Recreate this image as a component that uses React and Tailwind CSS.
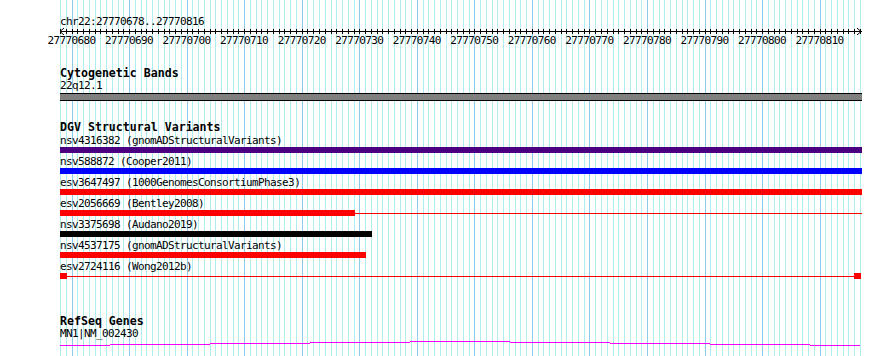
import React from 'react';

// track view constants
const START = 27770678;
const LEFT = 60;
const BASES = 139;
const SCALE = 800 / BASES;

const mono = "font-['DejaVu_Sans_Mono','Liberation_Mono',monospace]";

const variants = [
    { id: 'nsv4316382', source: 'gnomADStructuralVariants', bar: 'w-[802px] bg-[#4b0082]' },
    { id: 'nsv588872', source: 'Cooper2011', bar: 'w-[802px] bg-[#0000ff]' },
    { id: 'esv3647497', source: '1000GenomesConsortiumPhase3', bar: 'w-[802px] bg-[#ff0000]' },
    { id: 'esv2056669', source: 'Bentley2008', bar: 'w-[295px] bg-[#ff0000]', tail: true },
    { id: 'nsv3375698', source: 'Audano2019', bar: 'w-[312px] bg-black' },
    { id: 'nsv4537175', source: 'gnomADStructuralVariants', bar: 'w-[306px] bg-[#ff0000]' },
    { id: 'esv2724116', source: 'Wong2012b', split: true },
];

const geneSteps = [
    [60, 110, 345],
    [110, 210, 344],
    [210, 310, 343],
    [310, 410, 342],
    [410, 510, 341],
    [510, 610, 342],
    [610, 710, 343],
    [710, 810, 344],
    [810, 860, 345],
];

// ========================================
// Background grid (one line per base)
// ========================================
const Grid = () => {
    const lines = [];
    for (let k = 0; k <= BASES; k++) {
        const x = Math.round(LEFT + k * SCALE);
        lines.push(
            <rect key={k} x={x} y={0} width={1} height={356} fill={k % 10 === 2 ? '#8ccbeb' : '#aeeeee'} />
        );
    }
    return (
        <svg className="absolute inset-0" width={890} height={356} shapeRendering="crispEdges">
            {lines}
        </svg>
    );
};

const Ruler = () => {
    const ticks = [];
    for (let k = 0; k <= BASES; k++) {
        const x = Math.round(LEFT + k * SCALE) + 0.5;
        ticks.push(<line key={k} x1={x} y1={1.5} x2={x} y2={7} stroke="#000" strokeWidth={1} />);
    }
    return (
        <svg className="block" width={890} height={8} shapeRendering="crispEdges">
            <line x1={60} y1={4.5} x2={862} y2={4.5} stroke="#000" strokeWidth={1} />
            {ticks}
            <polyline points="64,1 60,4.5 64,8" fill="none" stroke="#000" strokeWidth={1} shapeRendering="auto" />
            <polyline points="857,1 861,4.5 857,8" fill="none" stroke="#000" strokeWidth={1} shapeRendering="auto" />
        </svg>
    );
};

const labels = [];
for (let k = 2; k < BASES; k += 10) labels.push(START + k);

const Title = ({ children, className = '' }) => (
    <div className={`h-[11px] leading-[11px] text-[11.6px] font-bold text-black ${mono} ${className}`}>{children}</div>
);

const Label = ({ children, className = '' }) => (
    <div className={`h-[11px] leading-[11px] text-[11px] tracking-[-0.62px] text-black whitespace-nowrap ${mono} ${className}`}>
        {children}
    </div>
);

const VariantRow = ({ v }) => (
    <div className="h-[21px]">
        <Label>
            {v.id} ({v.source})
        </Label>
        <div className="mt-px flex items-center h-[6px]">
            {v.split ? (
                <>
                    <div className="w-[7px] h-[6px] bg-[#ff0000]" />
                    <div className="w-[787px] h-px bg-[#ff0000]" />
                    <div className="w-[7px] h-[6px] bg-[#ff0000]" />
                </>
            ) : (
                <>
                    <div className={`h-[6px] ${v.bar}`} />
                    {v.tail && <div className="flex-1 h-px bg-[#ff0000]" />}
                </>
            )}
        </div>
    </div>
);

export default function App() {
    return (
        <div className="relative w-[890px] h-[356px] overflow-hidden bg-white">
            <Grid />
            <div className="relative">
                {/* Position header */}
                <div className="pt-[16px] pl-[60px]">
                    <Label>chr22:27770678..27770816</Label>
                </div>
                <Ruler />
                <div className={`flex pl-[42.7px] h-[11px] leading-[11px] text-[11px] tracking-[-0.62px] text-black ${mono}`}>
                    {labels.map((n) => (
                        <span key={n} className="w-[57.55px] shrink-0 text-center">
                            {n}
                        </span>
                    ))}
                </div>

                {/* Cytogenetic bands */}
                <div className="pl-[60px] mt-[22px]">
                    <Title>Cytogenetic Bands</Title>
                    <Label className="mt-px">22q12.1</Label>
                    <div className="mt-[2px] w-[802px] h-[8px] bg-[#808080] border-y border-black" />
                </div>

                {/* DGV structural variants */}
                <div className="pl-[60px] mt-[21px] w-[862px]">
                    <Title>DGV Structural Variants</Title>
                    <div className="mt-[2px]">
                        {variants.map((v) => (
                            <VariantRow key={v.id} v={v} />
                        ))}
                    </div>
                </div>

                {/* RefSeq genes */}
                <div className="pl-[60px] mt-[34px]">
                    <Title>RefSeq Genes</Title>
                    <Label className="mt-px">MN1|NM_002430</Label>
                </div>
                <svg className="block" width={890} height={8} shapeRendering="crispEdges">
                    {geneSteps.map(([x1, x2, y]) => (
                        <rect key={x1} x={x1} y={y - 339} width={x2 - x1} height={1} fill="#ff00ff" />
                    ))}
                </svg>
            </div>
        </div>
    );
}
